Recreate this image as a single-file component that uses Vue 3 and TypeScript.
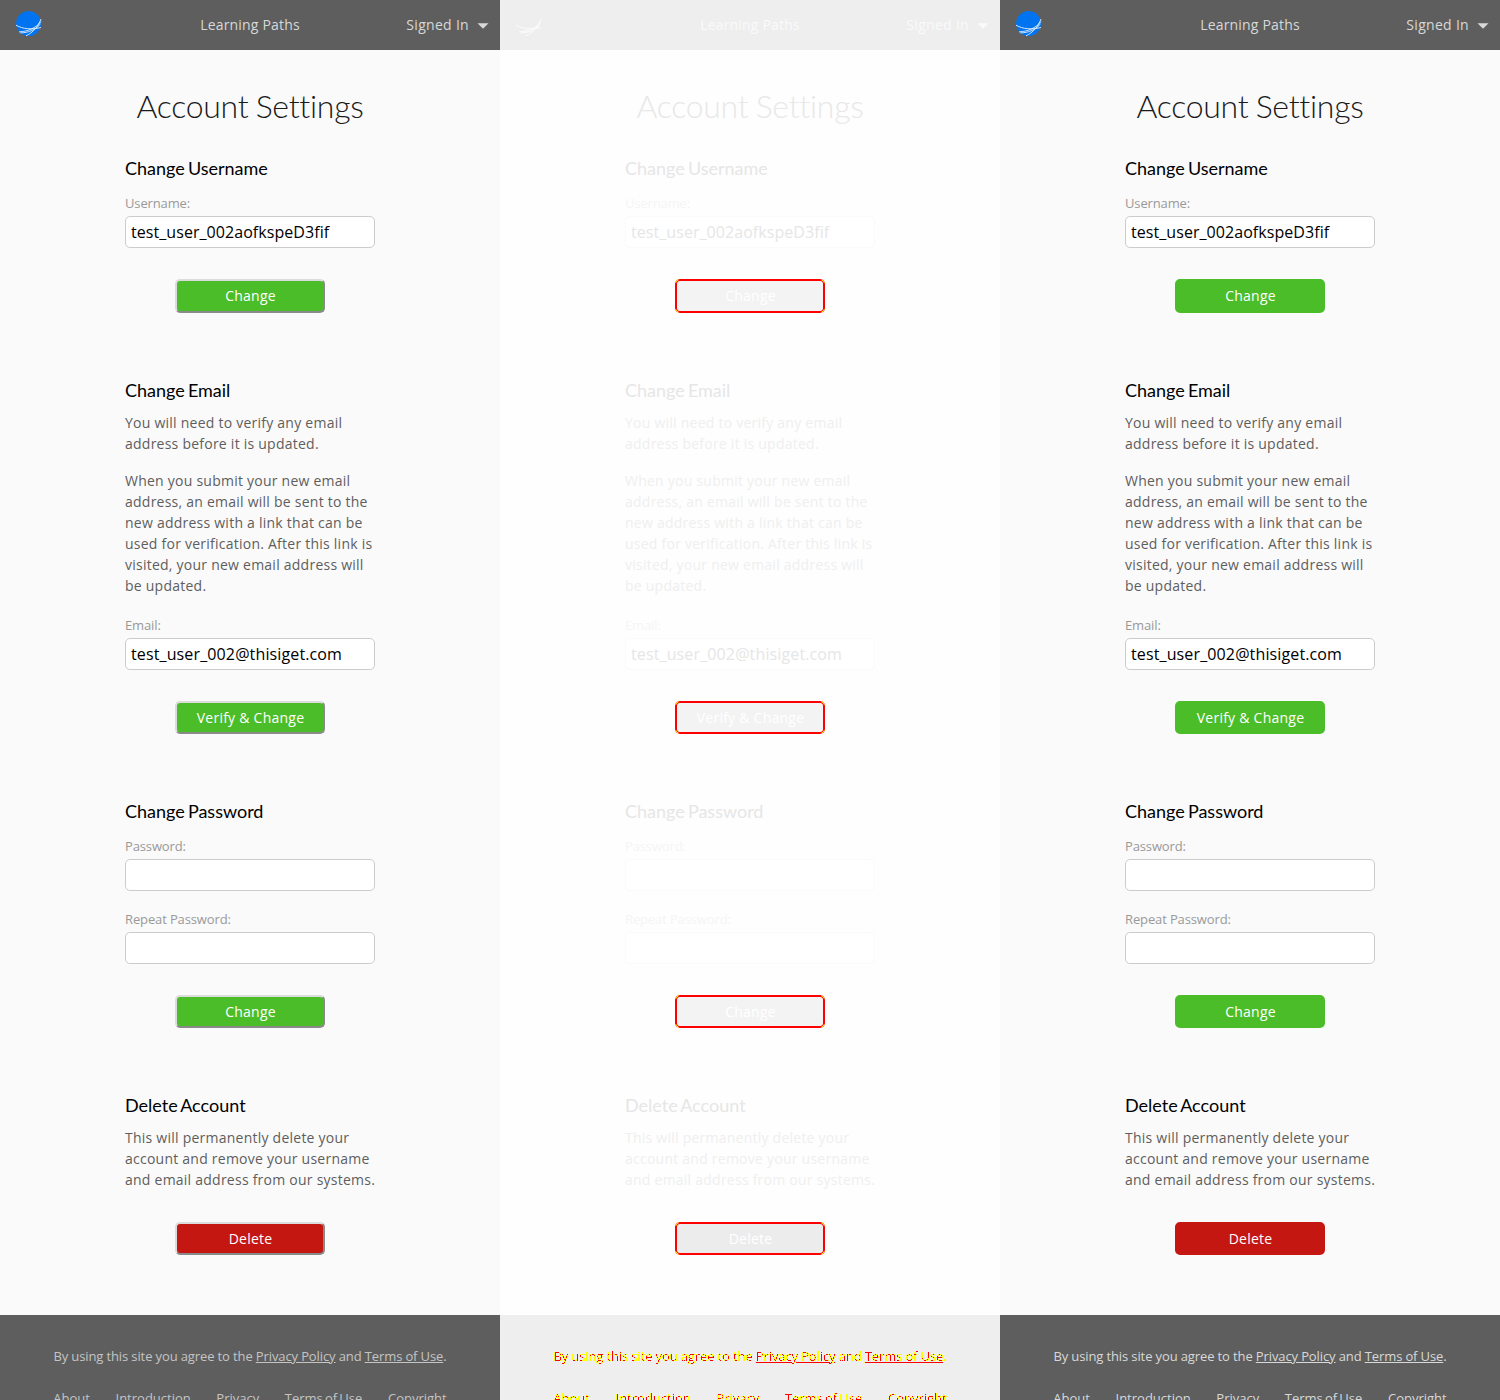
<script setup lang="ts">
type Variant = 'before' | 'diff' | 'after'
interface Field { label: string; value: string; type: string }
interface Section {
  title: string
  notes: string[]
  fields: Field[]
  action: string
  danger?: boolean
  tall?: boolean
}

const panels: Variant[] = ['before', 'diff', 'after']

const sections: Section[] = [
  {
    title: 'Change Username',
    notes: [],
    fields: [{ label: 'Username:', value: 'test_user_002aofkspeD3fif', type: 'text' }],
    action: 'Change',
    tall: true,
  },
  {
    title: 'Change Email',
    notes: [
      'You will need to verify any email address before it is updated.',
      'When you submit your new email address, an email will be sent to the new address with a link that can be used for verification. After this link is visited, your new email address will be updated.',
    ],
    fields: [{ label: 'Email:', value: 'test_user_002@thisiget.com', type: 'email' }],
    action: 'Verify & Change',
  },
  {
    title: 'Change Password',
    notes: [],
    fields: [
      { label: 'Password:', value: '', type: 'password' },
      { label: 'Repeat Password:', value: '', type: 'password' },
    ],
    action: 'Change',
  },
  {
    title: 'Delete Account',
    notes: ['This will permanently delete your account and remove your username and email address from our systems.'],
    fields: [],
    action: 'Delete',
    danger: true,
  },
]

const links = ['About', 'Introduction', 'Privacy', 'Terms of Use', 'Copyright']
</script>

<template>
  <div class="board">
    <div v-for="panel in panels" :key="panel" class="panel" :class="panel">
      <header class="bar">
        <svg class="logo" width="26" height="26" viewBox="0 0 26 26">
          <circle class="globe" cx="12.6" cy="12.6" r="12.5" />
          <g class="streaks" fill="none" stroke-linecap="butt">
            <path d="M0 14.2C7 18.2 16 18.8 25 16.5" />
            <path d="M3 20.9C12 20.4 20 17 25 10.5" />
            <path d="M4.5 21.9C12 21.5 18 20 24.5 13" />
            <path d="M10 24.8C17 21.5 22 16 25 8" />
          </g>
        </svg>
        <span class="crumb">Learning Paths</span>
        <span class="account">
          Signed In
          <svg class="caret" width="12" height="6" viewBox="0 0 12 6"><path d="M0.5 0.2H11.5L6 5.8Z" /></svg>
        </span>
      </header>

      <main class="content">
        <h1>Account Settings</h1>
        <section v-for="s in sections" :key="s.title">
          <h2>{{ s.title }}</h2>
          <div v-if="s.notes.length" class="notes">
            <p v-for="n in s.notes" :key="n">{{ n }}</p>
          </div>
          <div v-if="s.fields.length" class="fields" :class="{ spaced: s.notes.length }">
            <label v-for="f in s.fields" :key="f.label">
              <span>{{ f.label }}</span>
              <input :type="f.type" :value="f.value" />
            </label>
          </div>
          <button type="button" :class="{ danger: s.danger, tall: s.tall }">{{ s.action }}</button>
        </section>
      </main>

      <footer>
        <div class="legal">By using this site you agree to the <u>Privacy Policy</u> and <u>Terms of Use</u>.</div>
        <nav><span v-for="l in links" :key="l">{{ l }}</span></nav>
      </footer>
    </div>

    <svg class="defs" width="0" height="0">
      <filter id="mark" x="0" y="0" width="1" height="1" color-interpolation-filters="sRGB">
        <feComponentTransfer in="SourceAlpha" result="edgeMask">
          <feFuncA type="discrete" tableValues="0 0 1 1 1 1 1 1 1 1" />
        </feComponentTransfer>
        <feFlood flood-color="#ffff00" />
        <feComposite in2="edgeMask" operator="in" result="edge" />
        <feComponentTransfer in="SourceAlpha" result="coreMask">
          <feFuncA type="discrete" tableValues="0 0 0 0 0 0 0 0 1 1" />
        </feComponentTransfer>
        <feFlood flood-color="#ff0000" />
        <feComposite in2="coreMask" operator="in" result="core" />
        <feMerge><feMergeNode in="edge" /><feMergeNode in="core" /></feMerge>
      </filter>
    </svg>
  </div>
</template>

<style>
body { margin: 0; }
</style>

<style scoped>
.board {
  display: flex;
  width: 1500px;
  height: 1400px;
  overflow: hidden;
  font-family: "Open Sans", sans-serif;
}
.defs { position: absolute; }
.panel {
  --page: #fafafa;
  --bar: #5e5e5e;
  --bar-text: #d8d8d8;
  --globe: #0074f0;
  --streak: #e8f1fb;
  --title: #1a1a1a;
  --heading: #000;
  --text: #5e5e5e;
  --label: #999;
  --input: #000;
  --input-bg: #fff;
  --line: #ccc;
  --ok: #4bbd29;
  --bad: #c51712;
  --btn-text: #fff;
  --foot-text: #d8d8d8;
  width: 500px;
  height: 1400px;
  overflow: hidden;
  background: var(--page);
}
.before { --foot-text: #c4c4c4; }
.diff {
  --page: #fefefe;
  --bar: #eee;
  --bar-text: #fafafa;
  --globe: #eee;
  --streak: #fdfdfd;
  --title: #e8e8e8;
  --heading: #e6e6e6;
  --text: #efefef;
  --label: #f5f5f5;
  --input: #e6e6e6;
  --input-bg: #fff;
  --line: #fafafa;
  --ok: #f3f3f3;
  --bad: #ececec;
  --btn-text: #fff;
}
.bar {
  display: grid;
  grid-template-columns: 1fr auto 1fr;
  align-items: center;
  height: 50px;
  box-sizing: border-box;
  padding: 0 11px 2px 16px;
  background: var(--bar);
  color: var(--bar-text);
  font-size: 14px;
  letter-spacing: 0.3px;
}
.logo { display: block; }
.globe { fill: var(--globe); }
.streaks { stroke: var(--streak); stroke-width: 0.9; }
.crumb { margin-left: -5px; letter-spacing: 0.18px; }
.account { display: flex; justify-content: flex-end; align-items: center; gap: 8px; }
.caret { fill: var(--bar-text); margin-top: 3px; }
.content { width: 250px; height: 1265px; margin: 0 auto; }
h1 {
  margin: 0 -50px;
  padding-top: 31px;
  height: 75px;
  font: 300 32px/50px Lato, sans-serif;
  letter-spacing: -0.3px;
  word-spacing: -1px;
  text-align: center;
  color: var(--title);
}
section { display: flex; flex-direction: column; margin-bottom: 65px; }
h2 { margin: 0; font: 400 18px/24px Lato, sans-serif; word-spacing: -1.5px; color: var(--heading); }
.notes { display: flex; flex-direction: column; gap: 16px; margin: 10px -5px 1px 0; }
p { margin: 0; font-size: 14px; line-height: 21px; letter-spacing: 0.24px; color: var(--text); }
.fields { display: flex; flex-direction: column; gap: 19px; margin-top: 14px; }
.fields.spaced { margin-top: 19px; }
label { display: flex; flex-direction: column; gap: 4px; font-size: 13px; line-height: 18px; letter-spacing: -0.13px; color: var(--label); }
input {
  width: 250px;
  height: 32px;
  box-sizing: border-box;
  margin: 0;
  padding: 0 5px;
  border: 1px solid var(--line);
  border-radius: 5px;
  background: var(--input-bg);
  color: var(--input);
  font: 16px "Open Sans", sans-serif;
  letter-spacing: 0.06px;
}
input[type="email"] { letter-spacing: 0.13px; }
button {
  position: relative;
  align-self: center;
  width: 150px;
  height: 33px;
  box-sizing: border-box;
  margin: 31px 0 0;
  padding: 0 0 0 1px;
  border: 2px solid var(--ok);
  border-radius: 5px;
  background: var(--ok);
  color: var(--btn-text);
  font: 14px "Open Sans", sans-serif;
  letter-spacing: 0.24px;
}
button.tall { height: 34px; padding-bottom: 1px; }
button.danger { background: var(--bad); border-color: var(--bad); }
.before button { border-color: #dcdcdc #8a8a8a #8a8a8a #dcdcdc; }
.diff button { border-color: #f00; }
.diff button::after {
  content: "";
  position: absolute;
  inset: -2px;
  border: 1px solid #ff0;
  border-radius: 5px;
  mask:
    linear-gradient(#000 0 0) 0 0 / 4px 4px no-repeat,
    linear-gradient(#000 0 0) 100% 0 / 4px 4px no-repeat,
    linear-gradient(#000 0 0) 0 100% / 4px 4px no-repeat,
    linear-gradient(#000 0 0) 100% 100% / 4px 4px no-repeat;
}
footer {
  height: 85px;
  box-sizing: border-box;
  padding-top: 32px;
  background: var(--bar);
  color: var(--foot-text);
  font-size: 13px;
  line-height: 18px;
  overflow: hidden;
}
.legal { text-align: center; letter-spacing: -0.1px; word-spacing: -0.1px; }
nav { display: flex; justify-content: center; gap: 25.6px; margin-top: 24px; word-spacing: -1.2px; }
.diff .legal, .diff nav { filter: url(#mark); }
</style>
